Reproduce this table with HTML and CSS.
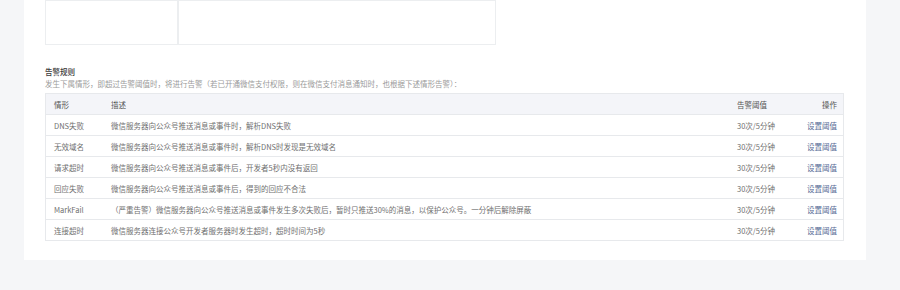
FILE: index.html
```html
<!DOCTYPE html>
<html lang="zh-CN">
<head>
  <meta charset="UTF-8">
  <title>告警规则</title>
  <link rel="stylesheet" href="styles.css">
</head>
<body>
  <div class="page">
    <div class="card">
      <div class="top-box">
        <div class="top-cell first"></div>
        <div class="top-cell"></div>
      </div>

      <h3 class="title">告警规则</h3>
      <p class="desc">发生下属情形，即超过告警阈值时，将进行告警（若已开通微信支付权限，则在微信支付消息通知时，也根据下述情形告警）：</p>

      <table class="rules">
        <thead>
          <tr>
            <th class="col-name">情形</th>
            <th>描述</th>
            <th class="col-limit">告警阈值</th>
            <th class="col-op">操作</th>
          </tr>
        </thead>
        <tbody>
          <tr>
            <td>DNS失败</td>
            <td>微信服务器向公众号推送消息或事件时，解析DNS失败</td>
            <td>30次/5分钟</td>
            <td class="col-op"><a href="#">设置阈值</a></td>
          </tr>
          <tr>
            <td>无效域名</td>
            <td>微信服务器向公众号推送消息或事件时，解析DNS时发现是无效域名</td>
            <td>30次/5分钟</td>
            <td class="col-op"><a href="#">设置阈值</a></td>
          </tr>
          <tr>
            <td>请求超时</td>
            <td>微信服务器向公众号推送消息或事件后，开发者5秒内没有返回</td>
            <td>30次/5分钟</td>
            <td class="col-op"><a href="#">设置阈值</a></td>
          </tr>
          <tr>
            <td>回应失败</td>
            <td>微信服务器向公众号推送消息或事件后，得到的回应不合法</td>
            <td>30次/5分钟</td>
            <td class="col-op"><a href="#">设置阈值</a></td>
          </tr>
          <tr>
            <td>MarkFail</td>
            <td>（严重告警）微信服务器向公众号推送消息或事件发生多次失败后，暂时只推送30%的消息，以保护公众号。一分钟后解除屏蔽</td>
            <td>30次/5分钟</td>
            <td class="col-op"><a href="#">设置阈值</a></td>
          </tr>
          <tr>
            <td>连接超时</td>
            <td>微信服务器连接公众号开发者服务器时发生超时，超时时间为5秒</td>
            <td>30次/5分钟</td>
            <td class="col-op"><a href="#">设置阈值</a></td>
          </tr>
        </tbody>
      </table>
    </div>
  </div>
</body>
</html>
```

FILE: styles.css
```css
html, body {
  margin: 0;
  padding: 0;
}

body {
  background: #f5f6f8;
  font-family: "Noto Sans CJK SC", "Open Sans", sans-serif;
  font-size: 7.5px;
  color: #707070;
}

.page {
  padding: 0 34px 30px 24px;
}

.card {
  background: #fff;
  padding: 0 22px 19px 21px;
}

.top-box {
  display: flex;
  width: 451px;
  height: 45px;
  box-sizing: border-box;
  border: 1px solid #eceef0;
}

.top-cell {
  flex: 1;
}

.top-cell.first {
  flex: 0 0 131px;
  border-right: 2px solid #eceef0;
}

.title {
  margin: 21px 0 0;
  font-size: 7.5px;
  line-height: 11px;
  font-weight: 500;
  color: #3a3a3a;
}

.desc {
  margin: 1px 0 0;
  line-height: 11px;
  color: #9a9a9a;
}

.rules {
  width: 100%;
  margin-top: 4px;
  border-collapse: collapse;
  border: 1px solid #e7e9ec;
}

.rules th, .rules td {
  height: 20px;
  padding: 0 8px;
  text-align: left;
  font-weight: normal;
  white-space: nowrap;
  border-bottom: 1px solid #e7e9ec;
  line-height: 11px;
}

.rules th {
  background: #f4f5f9;
  color: #555;
}

.col-name {
  width: 41px;
}

.col-limit {
  width: 46px;
}

.col-op {
  width: 38px;
  text-align: right !important;
  padding-right: 6px !important;
}

.rules a {
  color: #576b95;
  text-decoration: none;
}
```
